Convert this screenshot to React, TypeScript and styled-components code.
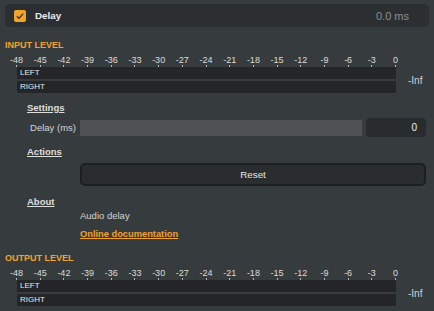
import styled, { createGlobalStyle } from "styled-components";

const GlobalStyle = createGlobalStyle`
  html, body {
    margin: 0;
    padding: 0;
    background: #363b3e;
  }
  body {
    font-family: "Liberation Sans", Arial, sans-serif;
    color: #e2e2e2;
  }
`;

const scaleValues = [-48, -45, -42, -39, -36, -33, -30, -27, -24, -21, -18, -15, -12, -9, -6, -3, 0];

const Meter = ({ title }: { title: string }) => (
  <MeterBlock>
    <SectionTitle>{title}</SectionTitle>
    <MeterBody>
      <Scale>
        {scaleValues.map((v) => (
          <Tick key={v}>
            <TickLabel>{v}</TickLabel>
            <TickMark />
          </Tick>
        ))}
      </Scale>
      <BarsRow>
        <Bars>
          <Bar>LEFT</Bar>
          <Bar>RIGHT</Bar>
        </Bars>
        <Peak>-Inf</Peak>
      </BarsRow>
    </MeterBody>
  </MeterBlock>
);

const CheckIcon = () => (
  <svg width="12" height="12" viewBox="0 0 12 12">
    <rect width="12" height="12" rx="2" fill="#f3a22a" />
    <path d="M2.8 6.2 L5 8.3 L9.2 3.6" fill="none" stroke="#3a3329" strokeWidth="1.3" />
  </svg>
);

const App = () => {
  return (
    <>
      <GlobalStyle />
      <Page>
        <Header>
          <CheckIcon />
          <HeaderName>Delay</HeaderName>
          <HeaderValue>0.0 ms</HeaderValue>
        </Header>

        <Meter title="INPUT LEVEL" />

        <Group>
          <Heading>Settings</Heading>
          <ParamRow>
            <ParamLabel>Delay (ms)</ParamLabel>
            <Slider />
            <NumberBox>0</NumberBox>
          </ParamRow>

          <Heading $top={9}>Actions</Heading>
          <ButtonRow>
            <ResetButton>Reset</ResetButton>
          </ButtonRow>

          <Heading $top={10}>About</Heading>
          <AboutText>Audio delay</AboutText>
          <DocLink>Online documentation</DocLink>
        </Group>

        <Meter title="OUTPUT LEVEL" />
      </Page>
    </>
  );
};

export default App;

const Page = styled.div`
  width: 434px;
  min-height: 311px;
  box-sizing: border-box;
  padding: 4px 5px 0 5px;
  display: flex;
  flex-direction: column;
`;

const Header = styled.div`
  height: 23px;
  border-radius: 5px;
  background: #2b2f32;
  display: flex;
  align-items: center;
  padding: 0 20px 0 9px;
`;

const HeaderName = styled.span`
  margin-left: 9px;
  font-size: 9.8px;
  font-weight: bold;
  color: #ececec;
`;

const HeaderValue = styled.span`
  margin-left: auto;
  font-size: 11px;
  color: #8a8f92;
`;

const MeterBlock = styled.div`
  display: flex;
  flex-direction: column;
`;

const SectionTitle = styled.div`
  margin-top: 13px;
  font-size: 9px;
  line-height: 11px;
  font-weight: bold;
  color: #f3a22a;
`;

const MeterBody = styled.div`
  margin-top: 4px;
  margin-left: 12px;
  display: flex;
  flex-direction: column;
`;

const Scale = styled.div`
  width: 380px;
  margin-left: -1px;
  height: 12px;
  display: flex;
  justify-content: space-between;
`;

const Tick = styled.div`
  width: 1px;
  display: flex;
  flex-direction: column;
  align-items: center;
`;

const TickLabel = styled.span`
  font-size: 9px;
  line-height: 10px;
  white-space: nowrap;
  color: #dcdcdc;
`;

const TickMark = styled.span`
  width: 1px;
  height: 2px;
  background: #b4b6b7;
`;

const BarsRow = styled.div`
  display: flex;
  align-items: center;
`;

const Bars = styled.div`
  width: 379px;
  display: flex;
  flex-direction: column;
  gap: 2px;
`;

const Bar = styled.div`
  height: 12px;
  background: #232526;
  padding-left: 3px;
  font-size: 8px;
  line-height: 12px;
  color: #ececec;
`;

const Peak = styled.span`
  margin-left: 12px;
  font-size: 10px;
  color: #d2d2d2;
`;

const Group = styled.div`
  padding: 0 3px 0 22px;
  display: flex;
  flex-direction: column;
`;

const Heading = styled.div<{ $top?: number }>`
  margin-top: ${(p) => p.$top ?? 9}px;
  font-size: 9.5px;
  line-height: 12px;
  font-weight: bold;
  text-decoration: underline;
  color: #dedede;
`;

const ParamRow = styled.div`
  margin-top: 4px;
  height: 19px;
  display: grid;
  grid-template-columns: 49px 1fr 60px;
  column-gap: 4px;
  align-items: center;
`;

const ParamLabel = styled.span`
  text-align: right;
  white-space: nowrap;
  font-size: 9.5px;
  color: #d4d4d4;
`;

const Slider = styled.div`
  height: 16px;
  background: #4f5152;
`;

const NumberBox = styled.div`
  height: 19px;
  border-radius: 4px;
  background: #292c2e;
  box-sizing: border-box;
  padding-right: 9px;
  text-align: right;
  font-size: 10px;
  line-height: 19px;
  color: #ececec;
`;

const ButtonRow = styled.div`
  margin-top: 5px;
  padding-left: 53px;
  display: flex;
`;

const ResetButton = styled.button`
  flex: 1;
  height: 23px;
  border: 2px solid #1d1f20;
  border-radius: 5px;
  background: #2a2d2f;
  font-family: "Liberation Sans", Arial, sans-serif;
  font-size: 9.8px;
  color: #e4e4e4;
  padding: 0;
`;

const AboutText = styled.div`
  margin-top: 2px;
  padding-left: 53px;
  font-size: 9.5px;
  line-height: 12px;
  color: #d4d4d4;
`;

const DocLink = styled.a`
  margin-top: 6px;
  margin-left: 53px;
  align-self: flex-start;
  font-size: 9.3px;
  line-height: 12px;
  font-weight: bold;
  text-decoration: underline;
  color: #f3a22a;
  cursor: pointer;
`;
